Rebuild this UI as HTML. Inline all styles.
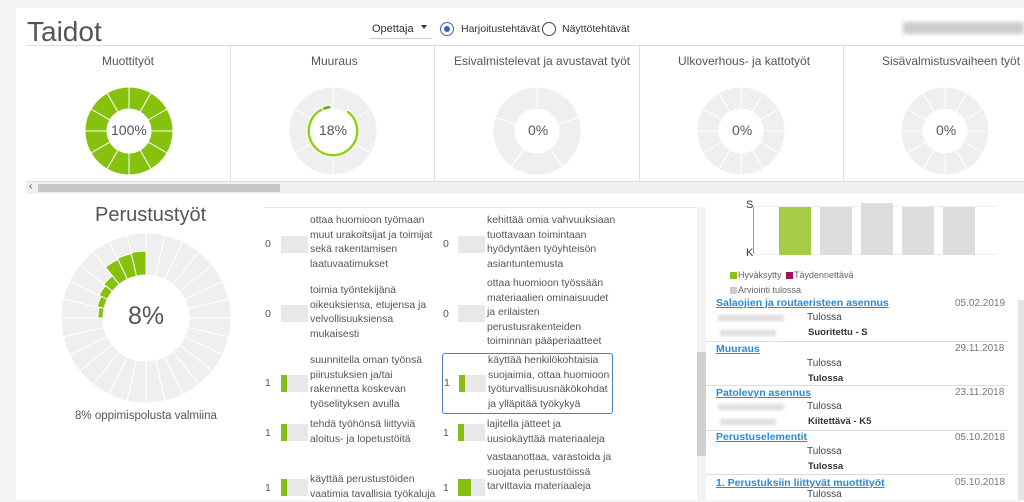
<!DOCTYPE html>
<html><head><meta charset="utf-8"><style>
*{margin:0;padding:0;box-sizing:border-box}
body{width:1024px;height:500px;overflow:hidden;background:#f4f5f7;font-family:"Liberation Sans",sans-serif;color:#555;position:relative}
.main{position:absolute;left:16px;top:8px;width:1008px;height:492px;background:#fff}
.a{position:absolute;white-space:nowrap}
.t{font-size:10.4px;line-height:14.6px;color:#555}
.n{font-size:10.5px;color:#555}
.bar{position:absolute;width:27px;height:17px;background:#e8e8e8}
.bar i{position:absolute;left:0;top:0;height:17px;background:#86bd10}
.lnk{color:#2a8ad8;text-decoration:underline;font-weight:bold;font-size:10.5px}
.sm{font-size:10px;color:#444}
.b{font-weight:bold;color:#333;font-size:9.5px}
.blur{position:absolute;height:6px;background:#ddd;filter:blur(1.5px)}
.sep{position:absolute;left:706px;width:302px;height:1px;background:#ddd}
</style></head><body>
<div class="main"></div>
<div class="a" style="left:27px;top:16px;font-size:28px;color:#555">Taidot</div>
<div class="a" style="left:372px;top:23px;font-size:11px;color:#333">Opettaja</div>
<div class="a" style="left:421px;top:25px;width:0;height:0;border-left:3.5px solid transparent;border-right:3.5px solid transparent;border-top:4px solid #333"></div>
<div class="a" style="left:370px;top:38px;width:62px;height:1px;background:#ccc"></div>
<div class="a" style="left:440px;top:22px;width:14px;height:14px;border:1.5px solid #3a5fc8;border-radius:50%"></div>
<div class="a" style="left:444px;top:26px;width:6px;height:6px;background:#3a5fc8;border-radius:50%"></div>
<div class="a" style="left:461px;top:23px;font-size:10.5px;color:#333">Harjoitustehtävät</div>
<div class="a" style="left:542px;top:22px;width:14px;height:14px;border:1.5px solid #444;border-radius:50%"></div>
<div class="a" style="left:562px;top:23px;font-size:10.5px;color:#333">Näyttötehtävät</div>
<div class="a" style="left:903px;top:22px;width:121px;height:12px;background:#ccc;filter:blur(2px)"></div>
<div class="a" style="left:26px;top:45px;width:998px;height:1px;background:#ddd"></div>
<div class="a" style="left:230px;top:46px;width:1px;height:135px;background:#ddd"></div>
<div class="a" style="left:434px;top:46px;width:1px;height:135px;background:#ddd"></div>
<div class="a" style="left:639px;top:46px;width:1px;height:135px;background:#ddd"></div>
<div class="a" style="left:843px;top:46px;width:1px;height:135px;background:#ddd"></div>
<div class="a" style="left:26px;top:181px;width:998px;height:1px;background:#ddd"></div>
<div class="a" style="left:26px;top:182px;width:998px;height:12px;background:#f0f0f0"></div>
<div class="a" style="left:38px;top:184px;width:242px;height:8px;background:#c8c8c8"></div>
<div class="a" style="left:29px;top:181px;font-size:10px;color:#444">‹</div>
<div class="a" style="left:102px;top:54px;font-size:12px">Muottityöt</div>
<div class="a" style="left:311px;top:54px;font-size:12px">Muuraus</div>
<div class="a" style="left:454px;top:54px;font-size:12px">Esivalmistelevat ja avustavat työt</div>
<div class="a" style="left:678px;top:54px;font-size:12px">Ulkoverhous- ja kattotyöt</div>
<div class="a" style="left:882px;top:54px;font-size:12px">Sisävalmistusvaiheen työt</div>
<svg id="sv" class="a" style="left:0;top:0" width="1024" height="500"></svg>
<div class="a" style="left:111px;top:122px;font-size:14px;color:#555">100%</div>
<div class="a" style="left:319px;top:122px;font-size:14px">18%</div>
<div class="a" style="left:528px;top:122px;font-size:14px">0%</div>
<div class="a" style="left:732px;top:122px;font-size:14px">0%</div>
<div class="a" style="left:936px;top:122px;font-size:14px">0%</div>
<div class="a" style="left:95px;top:204px;font-size:20px;color:#555">Perustustyöt</div>
<div class="a" style="left:128px;top:302px;font-size:25px;color:#555">8%</div>
<div class="a" style="left:75px;top:410px;font-size:11.5px;color:#555">8% oppimispolusta valmiina</div>
<div class="a" style="left:265px;top:207px;width:430px;height:1px;background:#e5e5e5"></div>
<div class="a" style="left:697px;top:207px;width:9px;height:293px;background:#f2f2f2"></div>
<div class="a" style="left:697px;top:352px;width:9px;height:104px;background:#cfcfcf"></div>
<!-- col1 -->
<div class="a t" style="left:310px;top:214px">ottaa huomioon työmaan<br>muut urakoitsijat ja toimijat<br>sekä rakentamisen<br>laatuvaatimukset</div>
<div class="a n" style="left:265px;top:238px">0</div><div class="bar" style="left:281px;top:236px"></div>
<div class="a t" style="left:310px;top:284px">toimia työntekijänä<br>oikeuksiensa, etujensa ja<br>velvollisuuksiensa<br>mukaisesti</div>
<div class="a n" style="left:265px;top:308px">0</div><div class="bar" style="left:281px;top:305px"></div>
<div class="a t" style="left:310px;top:354px">suunnitella oman työnsä<br>piirustuksien ja/tai<br>rakennetta koskevan<br>työselityksen avulla</div>
<div class="a n" style="left:265px;top:377px">1</div><div class="bar" style="left:281px;top:375px"><i style="width:6px"></i></div>
<div class="a t" style="left:310px;top:418px">tehdä työhönsä liittyviä<br>aloitus- ja lopetustöitä</div>
<div class="a n" style="left:265px;top:427px">1</div><div class="bar" style="left:281px;top:424px"><i style="width:6px"></i></div>
<div class="a t" style="left:310px;top:473px">käyttää perustustöiden<br>vaatimia tavallisia työkaluja</div>
<div class="a n" style="left:265px;top:482px">1</div><div class="bar" style="left:281px;top:479px"><i style="width:6px"></i></div>
<!-- col2 -->
<div class="a t" style="left:487px;top:214px">kehittää omia vahvuuksiaan<br>tuottavaan toimintaan<br>hyödyntäen työyhteisön<br>asiantuntemusta</div>
<div class="a n" style="left:443px;top:238px">0</div><div class="bar" style="left:458px;top:236px"></div>
<div class="a t" style="left:487px;top:277px">ottaa huomioon työssään<br>materiaalien ominaisuudet<br>ja erilaisten<br>perustusrakenteiden<br>toiminnan pääperiaatteet</div>
<div class="a n" style="left:443px;top:308px">0</div><div class="bar" style="left:458px;top:305px"></div>
<div class="a" style="left:442px;top:353px;width:171px;height:61px;border:1px solid #4a7fb8;border-radius:3px"></div>
<div class="a t" style="left:488px;top:354px">käyttää henkilökohtaisia<br>suojaimia, ottaa huomioon<br>työturvallisuusnäkökohdat<br>ja ylläpitää työkykyä</div>
<div class="a n" style="left:444px;top:377px">1</div><div class="bar" style="left:459px;top:375px"><i style="width:6px"></i></div>
<div class="a t" style="left:487px;top:418px">lajitella jätteet ja<br>uusiokäyttää materiaaleja</div>
<div class="a n" style="left:443px;top:427px">1</div><div class="bar" style="left:458px;top:424px"><i style="width:6px"></i></div>
<div class="a t" style="left:487px;top:451px">vastaanottaa, varastoida ja<br>suojata perustustöissä<br>tarvittavia materiaaleja</div>
<div class="a n" style="left:443px;top:482px">1</div><div class="bar" style="left:458px;top:479px"><i style="width:13px"></i></div>
<!-- right -->
<div class="a" style="left:746px;top:199px;font-size:11px;color:#333">S</div>
<div class="a" style="left:746px;top:247px;font-size:11px;color:#333">K</div>
<div class="a" style="left:753px;top:206px;width:1px;height:49px;background:#999"></div>
<div class="a" style="left:753px;top:206px;width:245px;height:1px;background:#eee"></div>
<div class="a" style="left:753px;top:254px;width:245px;height:1px;background:#eee"></div>
<div class="a" style="left:779px;top:207px;width:32px;height:48px;background:#a6cd45"></div>
<div class="a" style="left:820px;top:207px;width:32px;height:48px;background:#ddd"></div>
<div class="a" style="left:861px;top:203px;width:32px;height:52px;background:#ddd"></div>
<div class="a" style="left:902px;top:207px;width:32px;height:48px;background:#ddd"></div>
<div class="a" style="left:943px;top:207px;width:32px;height:48px;background:#ddd"></div>
<div class="a" style="left:730px;top:272px;width:7px;height:7px;background:#8cc21a"></div>
<div class="a" style="left:738px;top:270px;font-size:9px;color:#666">Hyväksytty</div>
<div class="a" style="left:786px;top:272px;width:7px;height:7px;background:#a0105a"></div>
<div class="a" style="left:794px;top:270px;font-size:9px;color:#666">Täydennettävä</div>
<div class="a" style="left:730px;top:287px;width:7px;height:7px;background:#ccc"></div>
<div class="a" style="left:738px;top:285px;font-size:9px;color:#666">Arviointi tulossa</div>
<div class="a" style="left:1005px;top:195px;width:19px;height:305px;background:#fff"></div>
<div class="a" style="left:1018px;top:300px;width:6px;height:200px;background:#e5e5e5"></div>

<div class="a lnk" style="left:716px;top:297px">Salaojien ja routaeristeen asennus</div>
<div class="a sm" style="left:955px;top:298px;color:#777">05.02.2019</div>
<div class="blur" style="left:718px;top:315px;width:66px"></div>
<div class="a sm" style="left:807px;top:312px">Tulossa</div>
<div class="blur" style="left:720px;top:330px;width:56px"></div>
<div class="a b" style="left:808px;top:327px">Suoritettu - S</div>
<div class="sep" style="top:341px"></div>
<div class="a lnk" style="left:716px;top:343px">Muuraus</div>
<div class="a sm" style="left:955px;top:343px;color:#777">29.11.2018</div>
<div class="a sm" style="left:807px;top:358px">Tulossa</div>
<div class="a b" style="left:808px;top:373px">Tulossa</div>
<div class="sep" style="top:385px"></div>
<div class="a lnk" style="left:716px;top:387px">Patolevyn asennus</div>
<div class="a sm" style="left:955px;top:387px;color:#777">23.11.2018</div>
<div class="blur" style="left:718px;top:404px;width:66px"></div>
<div class="a sm" style="left:807px;top:401px">Tulossa</div>
<div class="blur" style="left:720px;top:419px;width:56px"></div>
<div class="a b" style="left:808px;top:416px">Kiitettävä - K5</div>
<div class="sep" style="top:430px"></div>
<div class="a lnk" style="left:716px;top:431px">Perustuselementit</div>
<div class="a sm" style="left:955px;top:432px;color:#777">05.10.2018</div>
<div class="a sm" style="left:807px;top:446px">Tulossa</div>
<div class="a b" style="left:808px;top:461px">Tulossa</div>
<div class="sep" style="top:474px"></div>
<div class="a lnk" style="left:716px;top:477px">1. Perustuksiin liittyvät muottityöt</div>
<div class="a sm" style="left:955px;top:477px;color:#777">05.10.2018</div>
<div class="a sm" style="left:807px;top:489px">Tulossa</div>
<script>
var sv=document.getElementById('sv'),h='';
function seg(cx,cy,r1,r2,a1,a2,c){var p=Math.PI/180;
var x1=cx+r2*Math.sin(a1*p),y1=cy-r2*Math.cos(a1*p),x2=cx+r2*Math.sin(a2*p),y2=cy-r2*Math.cos(a2*p),
x3=cx+r1*Math.sin(a2*p),y3=cy-r1*Math.cos(a2*p),x4=cx+r1*Math.sin(a1*p),y4=cy-r1*Math.cos(a1*p);
var l=(a2-a1)>180?1:0;
h+='<path d="M'+x1+' '+y1+'A'+r2+' '+r2+' 0 '+l+' 1 '+x2+' '+y2+'L'+x3+' '+y3+'A'+r1+' '+r1+' 0 '+l+' 0 '+x4+' '+y4+'Z" fill="'+c+'" stroke="#fff" stroke-width="1"/>';}
function donut(cx,cy,n,c){for(var i=0;i<n;i++)seg(cx,cy,22,44,i*360/n,(i+1)*360/n,c);}
donut(129,131,12,'#86c10e');
donut(333,131,6,'#efefef');
seg(333,131,22.5,26,35,335,'#8fd011');seg(333,131,22.5,26,335,355,'#6aa50a');
donut(537,131,5,'#efefef');donut(741,131,12,'#efefef');donut(945,131,12,'#efefef');
var n=28,d=360/n;for(var i=0;i<n;i++)seg(146,318,43,85,i*d,(i+1)*d,'#efefef');
var rs=[67,66,65,54,52,50,48];
for(var k=0;k<rs.length;k++)seg(146,318,43,rs[k],360-(k+1)*d,360-k*d,'#86c10e');
sv.innerHTML=h;
</script>
</body></html>
